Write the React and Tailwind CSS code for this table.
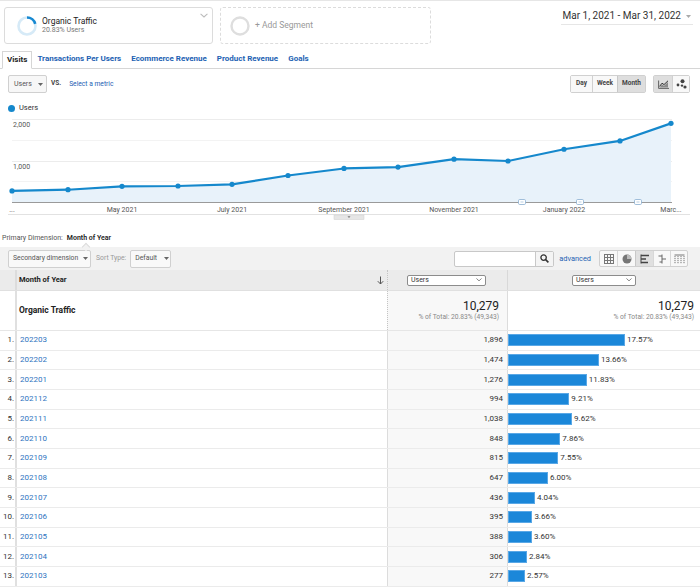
import React from "react";

const series = [277, 306, 388, 395, 436, 647, 815, 848, 1038, 994, 1276, 1474, 1896];
const xs = [12, 68, 122, 178, 232, 288, 344, 398, 454, 508, 564, 620, 671];

const rows = [
  { id: "202203", v: "1,896", p: 17.57 },
  { id: "202202", v: "1,474", p: 13.66 },
  { id: "202201", v: "1,276", p: 11.83 },
  { id: "202112", v: "994", p: 9.21 },
  { id: "202111", v: "1,038", p: 9.62 },
  { id: "202110", v: "848", p: 7.86 },
  { id: "202109", v: "815", p: 7.55 },
  { id: "202108", v: "647", p: 6.0 },
  { id: "202107", v: "436", p: 4.04 },
  { id: "202106", v: "395", p: 3.66 },
  { id: "202105", v: "388", p: 3.6 },
  { id: "202104", v: "306", p: 2.84 },
  { id: "202103", v: "277", p: 2.57 },
];

const yOf = (v) => 202.5 - v * 0.04175;

const Caret = ({ color = "#666" }) => (
  <svg width="5" height="3" viewBox="0 0 5 3">
    <path d="M0 0h5L2.5 3z" fill={color} />
  </svg>
);

const Chevron = ({ w = 7, h = 4, color = "#555" }) => (
  <svg width={w} height={h} viewBox="0 0 7 4">
    <path d="M0.5 0.5L3.5 3.3L6.5 0.5" stroke={color} strokeWidth="0.9" fill="none" />
  </svg>
);

const Donut = () => {
  const r = 8.5;
  const c = 2 * Math.PI * r;
  return (
    <svg width="20" height="20" viewBox="0 0 20 20">
      <circle cx="10" cy="10" r={r} stroke="#d6eaf7" strokeWidth="2.6" fill="none" />
      <circle
        cx="10"
        cy="10"
        r={r}
        stroke="#1688d1"
        strokeWidth="2.6"
        fill="none"
        strokeDasharray={`${c * 0.2083} ${c}`}
        transform="rotate(-90 10 10)"
      />
    </svg>
  );
};

const Chart = () => {
  const pts = series.map((v, i) => `${xs[i]},${yOf(v)}`).join(" ");
  const area = `12,202.5 ${pts} 671,202.5`;
  return (
    <svg width="700" height="106" viewBox="0 114 700 106" className="block">
      <line x1="12" x2="672" y1="119.5" y2="119.5" stroke="#ececec" />
      <line x1="12" x2="672" y1="140.5" y2="140.5" stroke="#f3f3f3" />
      <line x1="12" x2="672" y1="161.5" y2="161.5" stroke="#ececec" />
      <line x1="12" x2="672" y1="181.5" y2="181.5" stroke="#f3f3f3" />
      <polygon points={area} fill="#e8f2fa" />
      <line x1="12" x2="672" y1="202.5" y2="202.5" stroke="#9a9a9a" strokeWidth="1.2" />
      <polyline points={pts} fill="none" stroke="#1588cc" strokeWidth="2.2" strokeLinejoin="round" />
      {series.map((v, i) => (
        <circle key={i} cx={xs[i]} cy={yOf(v)} r="2.6" fill="#1588cc" />
      ))}
      <text x="13" y="127" fontSize="7" fill="#555" fontFamily="Roboto, sans-serif">2,000</text>
      <text x="13" y="169" fontSize="7" fill="#555" fontFamily="Roboto, sans-serif">1,000</text>
      {[522, 580, 638].map((x) => (
        <g key={x}>
          <rect x={x - 3.5} y="199.5" width="7" height="5" rx="1.2" fill="#fff" stroke="#8aaed0" strokeWidth="0.8" />
          <line x1={x - 1.5} x2={x + 1.5} y1="202" y2="202" stroke="#8aaed0" strokeWidth="0.6" />
        </g>
      ))}
      <g fontSize="7" fill="#555" fontFamily="Roboto, sans-serif" textAnchor="middle">
        <text x="12" y="211.5">...</text>
        <text x="122" y="211.5">May 2021</text>
        <text x="232" y="211.5">July 2021</text>
        <text x="344" y="211.5">September 2021</text>
        <text x="454" y="211.5">November 2021</text>
        <text x="564" y="211.5">January 2022</text>
        <text x="671" y="211.5">Marc...</text>
      </g>
      <line x1="8" x2="690" y1="214.5" y2="214.5" stroke="#e2e2e2" />
      <rect x="334" y="215" width="30" height="4.5" fill="#e6e6e6" stroke="#cfcfcf" strokeWidth="0.5" />
      <path d="M347.5 216.3h3L349 218z" fill="#777" />
    </svg>
  );
};

const LineIcon = () => (
  <svg width="11" height="9" viewBox="0 0 11 9">
    <path d="M0.6 0.5V8.4H11" stroke="#555" strokeWidth="0.9" fill="none" />
    <path d="M1.6 7.6L4 4.4L6 5.8L10 2V7.6Z" fill="#8a8a8a" />
    <path d="M1.6 6.4L4 3.2L6 4.6L10 0.8" stroke="#333" strokeWidth="1" fill="none" />
  </svg>
);

const MotionIcon = () => (
  <svg width="11" height="10" viewBox="0 0 11 10">
    <circle cx="6.5" cy="2.3" r="2" fill="#444" />
    <circle cx="2" cy="6" r="1.4" fill="#444" />
    <circle cx="6" cy="6.6" r="1.2" fill="#444" />
    <circle cx="9" cy="8" r="1.6" fill="#444" />
  </svg>
);

const GridIcon = () => (
  <svg width="10" height="10" viewBox="0 0 10 10">
    <rect x="0.5" y="0.5" width="9" height="9" fill="none" stroke="#777" />
    <path d="M3.5 0.5V9.5M6.5 0.5V9.5M0.5 3.5H9.5M0.5 6.5H9.5" stroke="#777" />
  </svg>
);

const PieIcon = () => (
  <svg width="10" height="10" viewBox="0 0 10 10">
    <circle cx="5" cy="5" r="4.5" fill="#777" />
    <path d="M5 5V0.5A4.5 4.5 0 0 1 9.5 5Z" fill="#bbb" />
  </svg>
);

const BarIcon = () => (
  <svg width="10" height="10" viewBox="0 0 10 10">
    <path d="M1 1.5H9M1 5H6M1 8.5H8" stroke="#444" strokeWidth="1.3" />
    <path d="M1 0.5V9.5" stroke="#444" strokeWidth="1" />
  </svg>
);

const CompareIcon = () => (
  <svg width="10" height="10" viewBox="0 0 10 10">
    <path d="M5 0.5V9.5" stroke="#666" />
    <path d="M1.5 2H5M5 5H9M2.5 8H5" stroke="#666" strokeWidth="1.2" />
  </svg>
);

const PivotIcon = () => (
  <svg width="11" height="10" viewBox="0 0 11 10">
    <path d="M0.5 1H10.5" stroke="#777" />
    <path d="M1 2V9.5M4 2V9.5M7 2V9.5M10 2V9.5" stroke="#777" strokeDasharray="1.2 0.8" />
  </svg>
);

const SearchIcon = () => (
  <svg width="9" height="9" viewBox="0 0 9 9">
    <circle cx="3.6" cy="3.6" r="2.7" stroke="#333" strokeWidth="1.3" fill="none" />
    <path d="M5.6 5.6L8.4 8.4" stroke="#333" strokeWidth="1.6" />
  </svg>
);

const DownArrow = () => (
  <svg width="7" height="9" viewBox="0 0 7 9">
    <path d="M3.5 0.5V8M0.8 5.2L3.5 8L6.2 5.2" stroke="#555" strokeWidth="1" fill="none" />
  </svg>
);

const UsersSelect = ({ w }) => (
  <div
    className={`${w} h-[11px] border border-[#8c8c8c] rounded-[2px] bg-white flex items-center justify-between pl-[3px] pr-[3px] text-[7px] text-[#333] leading-none`}
  >
    <span>Users</span>
    <Chevron w={6} h={3.5} color="#666" />
  </div>
);

export default function App() {
  return (
    <div className="w-[700px] h-[588px] overflow-hidden bg-white font-['Roboto',sans-serif] text-[#333]">
      {/* segment header */}
      <div className="border-t border-[#e6e6e6] flex items-start pt-[6px]">
        <div className="ml-[4px] w-[209px] h-[37px] border border-[#dcdcdc] rounded-[3px] flex items-center pl-[12px] relative">
          <Donut />
          <div className="ml-[5px]">
            <div className="text-[8.5px] leading-[10px] text-[#222]">Organic Traffic</div>
            <div className="text-[7px] leading-[9px] text-[#777]">20.83% Users</div>
          </div>
          <div className="absolute right-[4px] top-[5px]">
            <Chevron w={8} h={5} color="#bbb" />
          </div>
        </div>
        <div className="ml-[7px] w-[211px] h-[37px] border border-dashed border-[#dcdcdc] rounded-[3px] flex items-center pl-[9px]">
          <svg width="20" height="20" viewBox="0 0 20 20">
            <circle cx="10" cy="10" r="8.5" stroke="#dedede" strokeWidth="2.4" fill="none" />
          </svg>
          <span className="ml-[5px] text-[8.5px] text-[#999]">+ Add Segment</span>
        </div>
        <div className="ml-auto mr-[7px] mt-[1px] h-[17px] border-b border-[#e6e6e6] flex items-center gap-[5px] pl-[1px] pr-[2px]">
          <span className="text-[10px] text-[#333] leading-none">Mar 1, 2021 - Mar 31, 2022</span>
          <Caret color="#aaa" />
        </div>
      </div>

      {/* tabs */}
      <div className="mt-[7px] flex items-end h-[18px] border-b border-[#d6d6d6]">
        <div className="ml-[2px] h-[18px] -mb-px px-[4px] border border-[#d6d6d6] border-b-white bg-white flex items-center text-[8px] font-bold text-[#222]">
          Visits
        </div>
        {["Transactions Per Users", "Ecommerce Revenue", "Product Revenue", "Goals"].map((t) => (
          <div key={t} className="h-[18px] px-[5px] flex items-center text-[8px] font-bold text-[#1d62b3] whitespace-nowrap">
            {t}
          </div>
        ))}
      </div>

      {/* controls */}
      <div className="mt-[6px] h-[18px] flex items-center pl-[8px] pr-[10px]">
        <div className="w-[39px] h-[18px] border border-[#d0d0d0] rounded-[2px] bg-[#f7f7f7] flex items-center pl-[5px] gap-[6px] text-[7px] text-[#555]">
          <span>Users</span>
          <Caret color="#666" />
        </div>
        <span className="ml-[4px] text-[6.5px] font-bold text-[#444]">VS.</span>
        <span className="ml-[8px] text-[6.7px] text-[#1d62b3]">Select a metric</span>
        <div className="ml-auto flex h-[18px] border border-[#d0d0d0] rounded-[2px] text-[6.5px] font-bold text-[#444]">
          <div className="w-[21px] flex items-center justify-center bg-[#f8f8f8]">Day</div>
          <div className="w-[25px] flex items-center justify-center bg-[#f8f8f8] border-l border-[#d0d0d0]">Week</div>
          <div className="w-[28px] flex items-center justify-center bg-[#dedede] border-l border-[#c8c8c8]">Month</div>
        </div>
        <div className="ml-[7px] flex h-[18px] border border-[#d0d0d0] rounded-[2px]">
          <div className="w-[18px] flex items-center justify-center bg-[#dedede]">
            <LineIcon />
          </div>
          <div className="w-[17px] flex items-center justify-center bg-[#f8f8f8] border-l border-[#d0d0d0]">
            <MotionIcon />
          </div>
        </div>
      </div>

      {/* legend */}
      <div className="mt-[10px] h-[10px] flex items-center pl-[8px]">
        <span className="w-[7px] h-[7px] rounded-full bg-[#1588cc]" />
        <span className="ml-[4px] text-[7.5px] text-[#333]">Users</span>
      </div>

      <div className="mt-px">
        <Chart />
      </div>

      {/* primary dimension */}
      <div className="mt-[12px] h-[12px] flex items-center pl-[2px] text-[7px] relative">
        <span className="text-[#555]">Primary Dimension:</span>
        <span className="ml-[4px] font-semibold text-[#222]">Month of Year</span>
        <span className="absolute left-[83px] top-[12px] w-[6px] h-[6px] rotate-45 bg-[#f2f2f2] border-l border-t border-[#ddd]" />
      </div>

      {/* toolbar */}
      <div className="mt-[3px] h-[23px] bg-[#f2f2f2] flex items-center pl-[8px] pr-[12px]">
        <div className="w-[83px] h-[18px] border border-[#d0d0d0] rounded-[2px] bg-[#f9f9f9] flex items-center pl-[4px] gap-[5px] text-[6.8px] text-[#555] whitespace-nowrap">
          <span>Secondary dimension</span>
          <Caret color="#666" />
        </div>
        <span className="ml-[5px] text-[6.8px] text-[#999] whitespace-nowrap">Sort Type:</span>
        <div className="ml-[4px] w-[41px] h-[18px] border border-[#d0d0d0] rounded-[2px] bg-[#f9f9f9] flex items-center pl-[4px] gap-[7px] text-[6.8px] text-[#555]">
          <span>Default</span>
          <Caret color="#666" />
        </div>
        <div className="ml-auto flex h-[16px] border border-[#c8c8c8] rounded-[2px] bg-white">
          <div className="w-[80px]" />
          <div className="w-[18px] border-l border-[#c8c8c8] bg-[#f4f4f4] flex items-center justify-center">
            <SearchIcon />
          </div>
        </div>
        <span className="ml-[5px] text-[7.4px] text-[#1d62b3]">advanced</span>
        <div className="ml-[8px] flex h-[17px] border border-[#d0d0d0] rounded-[2px] bg-[#f8f8f8]">
          <div className="w-[17px] flex items-center justify-center"><GridIcon /></div>
          <div className="w-[18px] flex items-center justify-center border-l border-[#d8d8d8]"><PieIcon /></div>
          <div className="w-[18px] flex items-center justify-center border-l border-[#c8c8c8] bg-[#e0e0e0]"><BarIcon /></div>
          <div className="w-[17px] flex items-center justify-center border-l border-[#d8d8d8]"><CompareIcon /></div>
          <div className="w-[17px] flex items-center justify-center border-l border-[#d8d8d8]"><PivotIcon /></div>
        </div>
      </div>

      {/* table header */}
      <div className="h-[21px] bg-[#ebebeb] flex border-b border-[#e0e0e0]">
        <div className="w-[15px]" />
        <div className="w-[372px] border-l-2 border-[#dcdcdc] flex items-center pl-[2px] pr-[3px]">
          <span className="text-[7.5px] font-bold text-[#222]">Month of Year</span>
          <span className="ml-auto"><DownArrow /></span>
        </div>
        <div className="w-[120px] border-l border-dotted border-[#c4c4c4] flex items-center pl-[19px]">
          <UsersSelect w="w-[79px]" />
        </div>
        <div className="flex-1 border-l border-[#d8d8d8] flex items-center pl-[64px]">
          <UsersSelect w="w-[64px]" />
        </div>
      </div>

      {/* summary row */}
      <div className="h-[40px] flex border-b border-[#e6e6e6]">
        <div className="w-[15px]" />
        <div className="w-[372px] border-l-2 border-[#e0e0e0] flex items-center pl-[2px]">
          <span className="text-[8.5px] font-bold text-[#222]">Organic Traffic</span>
        </div>
        <div className="w-[120px] bg-[#f8f8f8] border-l border-dotted border-[#c4c4c4] flex flex-col items-end justify-center pr-[8px]">
          <span className="text-[12px] leading-[13px] text-[#222]">10,279</span>
          <span className="text-[6.7px] leading-[9px] text-[#888]">% of Total: 20.83% (49,343)</span>
        </div>
        <div className="flex-1 border-l border-[#dcdcdc] flex flex-col items-end justify-center pr-[6px]">
          <span className="text-[12px] leading-[13px] text-[#222]">10,279</span>
          <span className="text-[6.7px] leading-[9px] text-[#888]">% of Total: 20.83% (49,343)</span>
        </div>
      </div>

      {/* data rows */}
      {rows.map((r, i) => (
        <div key={r.id} className="h-[19.67px] flex border-b border-[#ebebeb] text-[8px]">
          <div className="w-[15px] flex items-center justify-end pr-[1px] text-[#333]">{i + 1}.</div>
          <div className="w-[372px] border-l-2 border-[#e0e0e0] flex items-center pl-[3px]">
            <span className="text-[#2f74c0]">{r.id}</span>
          </div>
          <div className="w-[120px] bg-[#f8f8f8] border-l border-[#dcdcdc] flex items-center justify-end pr-[4px] text-[#333]">
            {r.v}
          </div>
          <div className="flex-1 border-l border-[#dcdcdc] flex items-center">
            <div className="h-[12px] bg-[#1b87d9] border border-[#5aa8e6]" style={{ width: `${r.p * 6.66}px` }} />
            <span className="ml-[2px] text-[#333]">{r.p.toFixed(2)}%</span>
          </div>
        </div>
      ))}
    </div>
  );
}
